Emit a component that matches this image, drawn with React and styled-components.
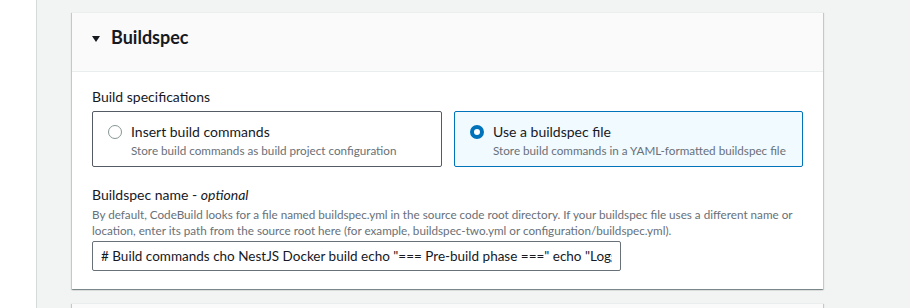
import styled, { createGlobalStyle } from 'styled-components';

const GlobalStyle = createGlobalStyle`
  html, body {
    margin: 0;
    padding: 0;
    background: #f2f3f3;
  }
  body {
    font-family: Lato, "Open Sans", Arial, sans-serif;
    color: #16191f;
  }
`;

const Page = styled.div`
  display: flex;
  width: 910px;
  height: 308px;
  overflow: hidden;
`;

const SideStrip = styled.div`
  width: 36px;
  flex-shrink: 0;
  background: #ffffff;
  border-right: 1px solid #d5dbdb;
`;

const Main = styled.main`
  flex: 1;
  padding: 12px 0 0 35px;
  display: flex;
  flex-direction: column;
  gap: 14px;
`;

const Card = styled.section`
  width: 751px;
  background: ${p => (p.$collapsed ? '#fafafa' : '#ffffff')};
  box-shadow: 0 1px 1px 0 rgba(0, 28, 36, 0.3), 1px 1px 1px 0 rgba(0, 28, 36, 0.15),
    -1px 1px 1px 0 rgba(0, 28, 36, 0.15);
  border-top: 1px solid #eaeded;
  flex-shrink: 0;
  min-height: ${p => (p.$collapsed ? '40px' : 'auto')};
`;

const CardHeader = styled.header`
  height: 59px;
  display: flex;
  align-items: center;
  gap: 11px;
  padding: 0 20px 11px 20px;
  background: #fafafa;
  border-bottom: 1px solid #eaeded;
  box-sizing: border-box;

  h2 {
    margin: 0;
    font-size: 18px;
    font-weight: 700;
    line-height: 22px;
    color: #16191f;
  }
`;

const Caret = styled.span`
  width: 0;
  height: 0;
  margin-top: 5px;
  border-left: 4.5px solid transparent;
  border-right: 4.5px solid transparent;
  border-top: 6px solid #16191f;
`;

const CardBody = styled.div`
  padding: 14px 20px 18px 20px;
  display: flex;
  flex-direction: column;
`;

const Label = styled.div`
  font-size: 14px;
  line-height: 22px;
  color: #16191f;

  i {
    font-style: italic;
  }
`;

const TileGrid = styled.div`
  display: grid;
  grid-template-columns: 350px 349px;
  gap: 12px;
  margin-top: 3px;
`;

const Tile = styled.label`
  display: flex;
  gap: 9px;
  height: 56px;
  box-sizing: border-box;
  padding: 10px 15px;
  border: 1px solid ${p => (p.$selected ? '#0073bb' : '#545b64')};
  border-radius: 2px;
  background: ${p => (p.$selected ? '#f1faff' : '#ffffff')};
`;

const Radio = styled.span`
  width: 14px;
  height: 14px;
  margin-top: 3px;
  flex-shrink: 0;
  border-radius: 50%;
  box-sizing: border-box;
  border: ${p => (p.$checked ? '4px solid #0073bb' : '1px solid #879596')};
  background: #ffffff;
`;

const TileText = styled.div`
  display: flex;
  flex-direction: column;
`;

const TileTitle = styled.span`
  font-size: 14px;
  line-height: 20px;
  color: #16191f;
`;

const Description = styled.div`
  font-size: 11.7px;
  line-height: 16px;
  color: #687078;
`;

const Field = styled.div`
  margin-top: 17px;
  display: flex;
  flex-direction: column;
`;

const TextInput = styled.input`
  margin-top: 3px;
  width: 529px;
  height: 30px;
  box-sizing: border-box;
  padding: 0 8px;
  border: 1px solid #687078;
  border-radius: 2px;
  font-family: inherit;
  font-size: 13.5px;
  color: #16191f;
  background: #ffffff;
  outline: none;
`;

const options = [
  {
    id: 'insert',
    title: 'Insert build commands',
    desc: 'Store build commands as build project configuration',
  },
  {
    id: 'file',
    title: 'Use a buildspec file',
    desc: 'Store build commands in a YAML-formatted buildspec file',
  },
];

export default function App() {
  const selected = 'file';

  return (
    <>
      <GlobalStyle />
      <Page>
        <SideStrip />
        <Main>
          <Card>
            <CardHeader>
              <Caret />
              <h2>Buildspec</h2>
            </CardHeader>
            <CardBody>
              <Label>Build specifications</Label>
              <TileGrid>
                {options.map(opt => (
                  <Tile key={opt.id} $selected={opt.id === selected}>
                    <Radio $checked={opt.id === selected} />
                    <TileText>
                      <TileTitle>{opt.title}</TileTitle>
                      <Description>{opt.desc}</Description>
                    </TileText>
                  </Tile>
                ))}
              </TileGrid>
              <Field>
                <Label>
                  Buildspec name - <i>optional</i>
                </Label>
                <Description>
                  By default, CodeBuild looks for a file named buildspec.yml in the source code root
                  directory. If your buildspec file uses a different name or location, enter its path
                  from the source root here (for example, buildspec-two.yml or
                  configuration/buildspec.yml).
                </Description>
                <TextInput
                  readOnly
                  value={'# Build commands cho NestJS Docker build echo "=== Pre-build phase ===" echo "Logging in to Amazon ECR..."'}
                />
              </Field>
            </CardBody>
          </Card>
          <Card $collapsed />
        </Main>
      </Page>
    </>
  );
}
